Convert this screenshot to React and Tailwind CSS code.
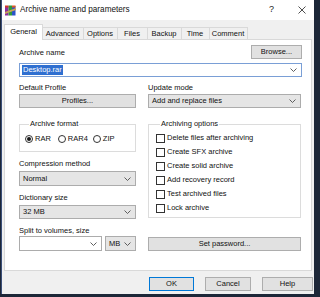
import React from "react";

const Chevron = () => (
  <svg width="7" height="4" viewBox="0 0 7 4" className="shrink-0">
    <path d="M0.5 0.5 L3.5 3.5 L6.5 0.5" fill="none" stroke="#4d4d4d" strokeWidth="0.9" />
  </svg>
);

const Btn = ({ children, className = "" }) => (
  <div className={"flex items-center justify-center bg-[#e1e1e1] border border-[#adadad] text-[#111] " + className}>
    {children}
  </div>
);

const Select = ({ value, className = "" }) => (
  <div className={"flex items-center justify-between bg-[#e5e5e5] border border-[#acacac] pl-[3px] pr-[4px] " + className}>
    <span>{value}</span>
    <Chevron />
  </div>
);

const Radio = ({ label, checked, className = "" }) => (
  <div className={"flex items-center gap-[2px] " + className}>
    <div className="w-[8px] h-[8px] rounded-full border border-[#333] bg-white flex items-center justify-center">
      {checked && <div className="w-[4px] h-[4px] rounded-full bg-[#1a1a1a]" />}
    </div>
    <span>{label}</span>
  </div>
);

const Check = ({ label }) => (
  <div className="flex items-center gap-[2px] h-[14px]">
    <div className="w-[9px] h-[9px] border border-[#333] bg-white" />
    <span>{label}</span>
  </div>
);

const Label = ({ children }) => (
  <div className="h-[10px] flex items-center leading-none">{children}</div>
);

const tabs = [
  { name: "General", w: "w-[39px]", sel: true },
  { name: "Advanced", w: "w-[42px]" },
  { name: "Options", w: "w-[35px]" },
  { name: "Files", w: "w-[31px]" },
  { name: "Backup", w: "w-[35px]" },
  { name: "Time", w: "w-[29px]" },
  { name: "Comment", w: "w-[39px]" },
];

const WinRarIcon = () => (
  <svg width="11" height="11" viewBox="0 0 11 11">
    <rect x="0" y="1" width="3.5" height="9.5" fill="#8b2fa0" />
    <rect x="3.5" y="0.5" width="3.5" height="10" fill="#2f9a3a" />
    <rect x="7" y="1" width="3.5" height="9.5" fill="#2b53c8" />
    <rect x="0" y="0.5" width="3.5" height="2" fill="#d43a2a" />
    <rect x="7" y="0.5" width="3.5" height="2" fill="#e05a20" />
    <path d="M0 7 L11 3 L11 5 L0 9 Z" fill="#c8a25a" />
  </svg>
);

export default function App() {
  return (
    <div
      className="w-[320px] h-[297px] bg-[#1d2738] overflow-hidden text-[7.5px] text-[#111]"
      style={{ fontFamily: '"Liberation Sans", Arial, sans-serif' }}
    >
      <div className="ml-[1px] w-[313px] h-[294px] bg-[#f0f0f0] flex flex-col border-l border-[#3a4e78]">
        {/* title bar */}
        <div className="h-[20px] bg-white flex items-center pl-[3px] shrink-0">
          <WinRarIcon />
          <span className="ml-[4px] text-[8.2px] text-[#111]">Archive name and parameters</span>
          <span className="ml-auto text-[9px] mr-[24px] text-[#222]">?</span>
          <svg width="8" height="8" viewBox="0 0 8 8" className="mr-[8px]">
            <path d="M0.5 0.5 L7.5 7.5 M7.5 0.5 L0.5 7.5" stroke="#222" strokeWidth="0.8" />
          </svg>
        </div>

        {/* tabs */}
        <div className="mt-[4px] ml-[2px] h-[16px] flex items-end relative z-10">
          {tabs.map((t) =>
            t.sel ? (
              <div
                key={t.name}
                className={"h-[16px] bg-white border-l border-t border-r border-[#d9d9d9] flex items-center justify-center pb-[2px] " + t.w}
              >
                {t.name}
              </div>
            ) : (
              <div
                key={t.name}
                className={"h-[12px] mb-[1px] -ml-px border-t border-r border-[#d9d9d9] flex items-center justify-center " + t.w}
              >
                {t.name}
              </div>
            )
          )}
        </div>

        {/* panel */}
        <div className="-mt-px ml-[2px] w-[308px] h-[232px] bg-white border border-[#d9d9d9] pl-[14px] pr-[9px] pt-[5px] flex flex-col">
          <div className="h-[14px] flex items-end justify-between">
            <div className="pb-[1px]">Archive name</div>
            <Btn className="w-[51px] h-[14px]">Browse...</Btn>
          </div>
          <div className="mt-[4px] h-[14px] border border-[#7a9fd6] bg-white flex items-center pl-[2px] pr-[4px]">
            <span className="bg-[#2f6fd0] text-white px-[1px] leading-[10px]">Desktop.rar</span>
            <div className="ml-auto"><Chevron /></div>
          </div>

          {/* row A */}
          <div className="mt-[6px] flex gap-[12px]">
            <div className="w-[117px] flex flex-col">
              <Label>Default Profile</Label>
              <Btn className="mt-[1px] h-[14px]">Profiles...</Btn>
            </div>
            <div className="w-[153px] flex flex-col">
              <Label>Update mode</Label>
              <Select className="mt-[1px] h-[14px]" value="Add and replace files" />
            </div>
          </div>

          {/* row B */}
          <div className="mt-[11px] flex gap-[12px]">
            <div className="w-[117px] flex flex-col">
              <fieldset className="border border-[#dcdcdc] h-[33px] px-[5px]">
                <legend className="ml-[4px] px-[1px] leading-[10px]">Archive format</legend>
                <div className="flex items-center mt-[4px]">
                  <Radio label="RAR" checked />
                  <Radio label="RAR4" className="ml-[7px]" />
                  <Radio label="ZIP" className="ml-[5px]" />
                </div>
              </fieldset>
              <div className="mt-[7px]"><Label>Compression method</Label></div>
              <Select className="mt-[2px] h-[15px]" value="Normal" />
              <div className="mt-[7px]"><Label>Dictionary size</Label></div>
              <Select className="mt-[2px] h-[14px]" value="32 MB" />
            </div>
            <div className="w-[153px]">
              <fieldset className="border border-[#dcdcdc] h-[99px] pl-[7px]">
                <legend className="ml-[4px] px-[1px] leading-[10px]">Archiving options</legend>
                <div className="flex flex-col mt-[2px]">
                  <Check label="Delete files after archiving" />
                  <Check label="Create SFX archive" />
                  <Check label="Create solid archive" />
                  <Check label="Add recovery record" />
                  <Check label="Test archived files" />
                  <Check label="Lock archive" />
                </div>
              </fieldset>
            </div>
          </div>

          {/* row C */}
          <div className="mt-[7px] flex gap-[12px] items-end">
            <div className="w-[117px] flex flex-col">
              <Label>Split to volumes, size</Label>
              <div className="flex gap-[3px] mt-[0px]">
                <div className="w-[83px] h-[15px] border border-[#acacac] bg-white flex items-center justify-end pr-[4px]">
                  <Chevron />
                </div>
                <Select className="w-[31px] h-[15px]" value="MB" />
              </div>
            </div>
            <Btn className="w-[153px] h-[14px]">Set password...</Btn>
          </div>
        </div>

        {/* footer */}
        <div className="mt-[6px] flex ml-[147px]">
          <Btn className="w-[45px] h-[14px] !border-[#0078d7]">OK</Btn>
          <Btn className="ml-[11px] w-[46px] h-[14px]">Cancel</Btn>
          <Btn className="ml-[11px] w-[51px] h-[14px]">Help</Btn>
        </div>
      </div>
    </div>
  );
}
